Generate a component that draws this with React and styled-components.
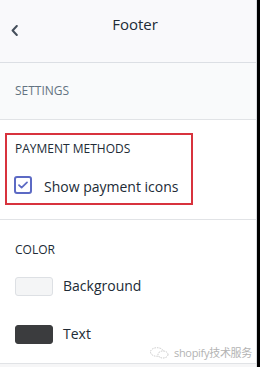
import React from "react";
import styled, { createGlobalStyle } from "styled-components";

const GlobalStyle = createGlobalStyle`
  html, body {
    margin: 0;
    padding: 0;
    background: #000;
  }
  body {
    font-family: "Open Sans", "Noto Sans", "Noto Sans CJK SC", sans-serif;
    color: #212b36;
  }
`;

const Page = styled.div`
  display: flex;
  width: 260px;
  height: 367px;
  background: #000;
  overflow: hidden;
`;

const Panel = styled.div`
  position: relative;
  display: flex;
  flex-direction: column;
  width: 256px;
  height: 100%;
  background: #f6f6f7;
  border-right: 1px solid #d9dce0;
`;

const Header = styled.header`
  display: grid;
  grid-template-columns: 28px 1fr 14px;
  align-items: start;
  box-sizing: border-box;
  height: 63px;
  padding-top: 14px;
  background: #f9f9fb;
  border-bottom: 1px solid #dcdfe4;
  box-shadow: 0 1px 1px rgba(0, 0, 0, 0.04);
`;

const Back = styled.button`
  display: flex;
  padding: 11px 0 0 11px;
  margin: 0;
  border: 0;
  background: none;
  cursor: pointer;
`;

const Title = styled.h1`
  margin: 0;
  font-size: 15px;
  line-height: 20px;
  font-weight: 500;
  text-align: center;
  color: #212b36;
`;

const Section = styled.section`
  padding: ${(p) => p.$pad};
  background: ${(p) => (p.$muted ? "#f9fafb" : "#fff")};
  border-bottom: 1px solid #e1e3e6;
`;

const Heading = styled.h2`
  margin: 0;
  font-size: 12px;
  line-height: 16px;
  font-weight: 400;
  text-transform: uppercase;
  color: ${(p) => (p.$muted ? "#637381" : "#212b36")};
`;

const Highlight = styled.div`
  box-sizing: border-box;
  width: 188px;
  padding: 6px 8px 6px 8px;
  border: 2px solid #d8333d;
`;

const CheckRow = styled.label`
  display: flex;
  align-items: flex-start;
  gap: 12px;
  margin-top: 19px;
  font-size: 14px;
  line-height: 20px;
  color: #212b36;
`;

const Box = styled.span`
  display: flex;
  align-items: center;
  justify-content: center;
  box-sizing: border-box;
  width: 18px;
  height: 18px;
  margin-left: -1px;
  border: 2px solid #5c6ac4;
  border-radius: 3px;
  background: #fff;
`;

const Label = styled.span`
  margin-top: 1px;
`;

const SwatchList = styled.div`
  display: flex;
  flex-direction: column;
  gap: 28px;
  margin-top: 18px;
`;

const SwatchRow = styled.div`
  display: flex;
  align-items: center;
  gap: 10px;
  font-size: 14px;
  line-height: 20px;
`;

const Swatch = styled.span`
  box-sizing: border-box;
  width: 38px;
  height: 19px;
  border-radius: 3px;
  background: ${(p) => p.$color};
  border: 1px solid ${(p) => p.$edge};
`;

const Watermark = styled.div`
  position: absolute;
  right: 4px;
  bottom: 7px;
  display: flex;
  align-items: center;
  gap: 4px;
  font-size: 11px;
  line-height: 14px;
  letter-spacing: -0.3px;
  color: #b3b3b3;
`;

function Chevron() {
  return (
    <svg width="7" height="11" viewBox="0 0 7 11">
      <path
        d="M5.8 1 L1.6 5.5 L5.8 10"
        fill="none"
        stroke="#454f5b"
        strokeWidth="2"
        strokeLinecap="round"
        strokeLinejoin="round"
      />
    </svg>
  );
}

function Tick() {
  return (
    <svg width="12" height="10" viewBox="0 0 12 10">
      <path
        d="M2 5.2 L4.6 7.6 L10 2.4"
        fill="none"
        stroke="#5c6ac4"
        strokeWidth="1.8"
        strokeLinecap="round"
        strokeLinejoin="round"
      />
    </svg>
  );
}

function Bubbles() {
  return (
    <svg width="21" height="12" viewBox="0 0 21 12">
      <ellipse cx="8" cy="5" rx="6.5" ry="4.3" fill="none" stroke="#c9c9c9" strokeWidth="1" strokeDasharray="1.5 1" />
      <ellipse cx="14" cy="7.5" rx="5" ry="3.5" fill="#fff" stroke="#c9c9c9" strokeWidth="1" strokeDasharray="1.5 1" />
    </svg>
  );
}

export default function App() {
  const swatches = [
    { name: "Background", color: "#f4f5f6", edge: "#dde0e4" },
    { name: "Text", color: "#3b3c3e", edge: "#3b3c3e" },
  ];

  return (
    <Page>
      <GlobalStyle />
      <Panel>
        <Header>
          <Back aria-label="Back">
            <Chevron />
          </Back>
          <Title>Footer</Title>
        </Header>

        <Section $muted $pad="20px 15px">
          <Heading $muted>Settings</Heading>
        </Section>

        <Section $pad="13px 0 14px 5px">
          <Highlight>
            <Heading>Payment methods</Heading>
            <CheckRow>
              <Box>
                <Tick />
              </Box>
              <Label>Show payment icons</Label>
            </CheckRow>
          </Highlight>
        </Section>

        <Section $pad="22px 15px 19px 15px">
          <Heading>Color</Heading>
          <SwatchList>
            {swatches.map((s) => (
              <SwatchRow key={s.name}>
                <Swatch $color={s.color} $edge={s.edge} />
                <span>{s.name}</span>
              </SwatchRow>
            ))}
          </SwatchList>
        </Section>

        <Watermark>
          <Bubbles />
          <span>shopify技术服务</span>
        </Watermark>
      </Panel>
    </Page>
  );
}
